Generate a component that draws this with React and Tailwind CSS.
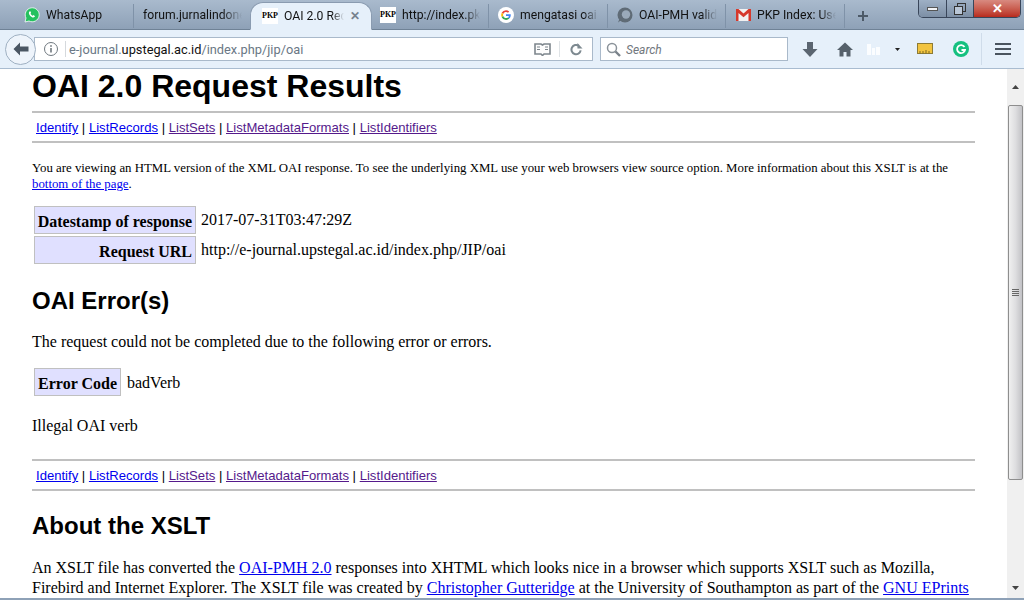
import React from "react";

const Sep = () => <div className="w-px h-[24px] bg-[#7f92a8] shrink-0" />;

const Pkp = () => (
  <span className="w-4 h-4 bg-white text-black text-[8px] font-bold flex items-center justify-center shrink-0 font-['Liberation_Serif',serif] leading-none">PKP</span>
);

function Tab({ icon, label, w, pl = "pl-[9px]" }) {
  return (
    <div className={`flex items-center gap-[6px] shrink-0 overflow-hidden pr-[8px] ${pl}`} style={{ width: w }}>
      {icon}
      <span className="text-[12.2px] text-[#111] whitespace-nowrap overflow-hidden flex-1 [mask-image:linear-gradient(90deg,#000_80%,transparent)]">{label}</span>
    </div>
  );
}

const WhatsApp = () => (
  <svg width="16" height="16" viewBox="0 0 16 16" className="shrink-0">
    <path d="M1 15l1-4A7 7 0 1 1 5 14z" fill="#25c15f" stroke="#fff" strokeWidth="0.8" />
    <path d="M5.5 4.5c-1 1-.8 2.6.6 4.2 1.5 1.6 3.2 2.3 4.3 1.4.6-.5.6-1 .4-1.2l-1.4-.8-.7.7c-.8-.2-1.900-1.300-2.200-2.200l.7-.7-.7-1.500c-.2-.1-.6 0-1 .1z" fill="#fff" />
  </svg>
);
const Google = () => (
  <svg width="16" height="16" viewBox="0 0 16 16" className="shrink-0">
    <circle cx="8" cy="8" r="8" fill="#fff" />
    <path d="M8 3.200A4.800 4.800 0 0 1 11.200 4.400L10 5.700A3 3 0 0 0 5.200 7L3.700 5.800A4.800 4.800 0 0 1 8 3.200z" fill="#ea4335" />
    <path d="M3.700 5.800L5.200 7a3 3 0 0 0 0 2L3.700 10.200a4.800 4.800 0 0 1 0-4.400z" fill="#fbbc05" />
    <path d="M3.700 10.200L5.200 9A3 3 0 0 0 10 10.400l1.400 1.100A4.800 4.800 0 0 1 3.700 10.200z" fill="#34a853" />
    <path d="M8 7.200h4.700c.2 1.700-.3 3.200-1.300 4.300L10 10.400c.5-.4.800-.9.900-1.500H8z" fill="#4285f4" />
  </svg>
);
const Oai = () => (
  <svg width="16" height="16" viewBox="0 0 16 16" className="shrink-0">
    <circle cx="8" cy="8" r="7.500" fill="#5f6b76" />
    <circle cx="9" cy="7.500" r="4.200" fill="#9aa9b9" />
    <path d="M1 15.500l4-3-2-2z" fill="#5f6b76" />
  </svg>
);
const Gmail = () => (
  <svg width="15" height="12" viewBox="0 0 15 12" className="shrink-0">
    <rect width="15" height="12" fill="#f1f1f1" />
    <path d="M0 0h2.500L7.500 4.500 12.500 0H15v12h-2.500V4L7.500 8.200 2.500 4v8H0z" fill="#d6382c" />
  </svg>
);

const link = "text-[#0000ee] underline";
const visited = "text-[#551a8b] underline";

function Nav() {
  return (
    <div className="border-y-2 border-[#c0c0c0] h-[32px] flex items-center pl-1 pt-[2px] text-[13.1px] text-black font-['Liberation_Sans',sans-serif] whitespace-pre">
      <a className={link}>Identify</a> | <a className={link}>ListRecords</a> | <a className={visited}>ListSets</a> | <a className={visited}>ListMetadataFormats</a> | <a className={visited}>ListIdentifiers</a>
    </div>
  );
}

const Th = ({ children }) => (
  <div className="bg-[#e0e0ff] border border-[#c0c0c0] font-bold text-[16px] text-right whitespace-nowrap pr-[3px] h-[28px] leading-[29px]">{children}</div>
);

const h2 = "font-['Liberation_Sans',sans-serif] font-bold text-[24px] leading-[28px] text-black";

export default function App() {
  return (
    <div className="w-[1024px] h-[600px] overflow-hidden flex flex-col bg-white font-['Liberation_Serif',serif]">
      {/* tab strip */}
      <div className="h-[30px] shrink-0 pt-[2px] bg-gradient-to-b from-[#a9bacd] to-[#8ea1b7] border-b border-[#6f8296] flex items-center relative font-['Roboto',sans-serif]">
        <div className="w-[15px] shrink-0" />
        <Tab icon={<WhatsApp />} label="WhatsApp" w={118} />
        <Sep />
        <Tab icon={null} label="forum.jurnalindonesia" w={116} />
        <div className="w-[122px] h-[28px] -mb-px self-end shrink-0 bg-[#e6f0fa] rounded-t-[13px] flex items-center px-[11px] gap-[6px] relative z-10 border-x border-t border-[#8a9bb0] border-b border-b-[#e6f0fa]">
          <Pkp />
          <span className="text-[12.2px] text-[#111] whitespace-nowrap overflow-hidden w-[60px] [mask-image:linear-gradient(90deg,#000_80%,transparent)]">OAI 2.0 Request</span>
          <span className="ml-auto text-[12px] font-bold text-[#76828e] leading-none">✕</span>
        </div>
        <Tab icon={<Pkp />} label="http://index.pkp" w={116} pl="pl-[8px]" />
        <Sep />
        <Tab icon={<Google />} label="mengatasi oai" w={118} pl="pl-[9px]" />
        <Sep />
        <Tab icon={<Oai />} label="OAI-PMH validator" w={117} pl="pl-[9px]" />
        <Sep />
        <Tab icon={<Gmail />} label="PKP Index: User" w={118} pl="pl-[10px]" />
        <Sep />
        <svg width="12" height="12" viewBox="0 0 12 12" className="ml-[12px] shrink-0"><path d="M6 1v10M1 6h10" stroke="#4d5a68" strokeWidth="2" /></svg>
        {/* window controls */}
        <div className="absolute right-[3px] top-0 w-[103px] h-[18px] flex rounded-b-[5px] overflow-hidden border border-t-0 border-[#39465a]">
          <div className="w-[28px] bg-gradient-to-b from-[#9eb0c5] to-[#7d8fa5] flex items-center justify-center border-r border-[#39465a]">
            <div className="w-[11px] h-[4px] bg-[#f1f3f6] border border-[#555]" />
          </div>
          <div className="w-[27px] bg-gradient-to-b from-[#9eb0c5] to-[#7d8fa5] flex items-center justify-center border-r border-[#39465a]">
            <svg width="12" height="12" viewBox="0 0 12 12"><rect x="3.500" y="0.500" width="8" height="8" fill="none" stroke="#333" /><rect x="0.500" y="3.500" width="8" height="8" fill="#b9c6d6" stroke="#333" /></svg>
          </div>
          <div className="flex-1 bg-gradient-to-b from-[#d88a80] to-[#b8291c] flex items-center justify-center text-white text-[13px] font-bold leading-none">✕</div>
        </div>
      </div>
      {/* nav bar */}
      <div className="h-[39px] shrink-0 bg-[#e6f0fa] border-b border-[#a9bcd0] flex items-center relative">
        <div className="ml-[5px] w-[31px] h-[31px] rounded-full bg-[#eef4fb] border border-[#9fb0c2] flex items-center justify-center relative z-10 shrink-0">
          <svg width="16" height="14" viewBox="0 0 16 14"><path d="M7 0.500L0.500 7 7 13.500V9.500h8.500v-5H7z" fill="#4a5663" /></svg>
        </div>
        <div className="-ml-[2px] w-[559px] h-[24px] bg-white border border-[#a9b9ca] flex items-center shrink-0 font-['Roboto',sans-serif] text-[12.8px]">
          <svg width="16" height="16" viewBox="0 0 16 16" className="ml-[8px] shrink-0"><circle cx="8" cy="8" r="6.500" fill="none" stroke="#70797f" /><rect x="7.200" y="7" width="1.600" height="4.500" fill="#70797f" /><rect x="7.200" y="4.200" width="1.600" height="1.600" fill="#70797f" /></svg>
          <div className="w-px h-[16px] bg-[#d5d9dd] ml-[6px] mr-[3px]" />
          <span className="text-[#6a7785] pt-px">e-journal.<span className="text-[#111]">upstegal.ac.id</span>/index.php/jip/oai</span>
          <div className="ml-auto flex items-center">
            <svg width="17" height="13" viewBox="0 0 17 13"><path d="M1 1h6l1.500 1L10 1h6v10h-6l-1.500 1.500L7 11H1z" fill="#fdfdfd" stroke="#7d868d" strokeWidth="1.600" /><path d="M3 4h3M3 6.500h3M11 4h3M11 6.500h3" stroke="#7d868d" /></svg>
            <div className="w-px h-[16px] bg-[#dfe3e6] ml-[8px] mr-[10px]" />
            <svg width="13" height="13" viewBox="0 0 14 14" className="mr-[9px]"><path d="M11.500 8A5 5 0 1 1 9.500 3" fill="none" stroke="#7d8990" strokeWidth="2.200" /><path d="M8 0v6h5.500z" fill="#7d8990" /></svg>
          </div>
        </div>
        <div className="ml-[7px] w-[188px] h-[24px] bg-white border border-[#a9b9ca] flex items-center shrink-0 font-['Roboto',sans-serif]">
          <svg width="15" height="15" viewBox="0 0 15 15" className="ml-[5px] shrink-0"><circle cx="6" cy="6" r="4.500" fill="none" stroke="#8a9299" strokeWidth="1.500" /><path d="M9.500 9.500L14 14" stroke="#7a828a" strokeWidth="2.400" /></svg>
          <span className="ml-[5px] pt-px text-[12px] italic text-[#71777d]">Search</span>
        </div>
        <svg width="16" height="15" viewBox="0 0 16 15" className="ml-[14px] shrink-0"><path d="M5 0h6v7h4.500L8 15 .5 7H5z" fill="#5b6570" /></svg>
        <svg width="16" height="15" viewBox="0 0 16 15" className="ml-[19px] shrink-0"><path d="M8 .5L0 8h2.500v6.500h4V10h3v4.500h4V8H16z" fill="#56616b" /></svg>
        <div className="ml-[14px] w-[13px] h-[11px] flex items-end gap-px shrink-0">
          <div className="w-[4px] h-[11px] bg-[#fbfdff]" />
          <div className="w-[4px] h-[7px] bg-[#fbfdff]" />
          <div className="w-[4px] h-[8px] bg-[#fbfdff]" />
        </div>
        <svg width="5" height="3" viewBox="0 0 5 3" className="ml-[15px] shrink-0"><path d="M0 0h5L2.500 3z" fill="#222" /></svg>
        <svg width="16" height="13" viewBox="0 0 16 13" className="ml-[17px] shrink-0"><rect x=".5" y=".5" width="15" height="10" fill="#f2c440" stroke="#8d7b35" /><path d="M3 10.500V8M6 10.500V8M9 10.500V7M12 10.500V8" stroke="#7d6a20" /></svg>
        <svg width="16" height="16" viewBox="0 0 16 16" className="ml-[20px] shrink-0"><circle cx="8" cy="8" r="8" fill="#15c07f" /><path d="M11.500 6A4 4 0 1 0 12 9H8.500" fill="none" stroke="#fff" strokeWidth="1.800" /></svg>
        <div className="w-px h-[32px] bg-[#cfdcea] ml-[12px] shrink-0" />
        <div className="ml-[13px] w-[16px] flex flex-col gap-[3px] shrink-0">
          <div className="h-[2px] bg-[#4a545e]" />
          <div className="h-[2px] bg-[#4a545e]" />
          <div className="h-[2px] bg-[#4a545e]" />
        </div>
      </div>
      {/* page */}
      <div className="flex-1 flex min-h-0 relative">
        <div className="flex-1 min-w-0 overflow-hidden pl-[32px] pr-[32px] text-black">
          <h1 className="font-['Liberation_Sans',sans-serif] font-bold text-[32px] leading-[34px]">OAI 2.0 Request Results</h1>
          <div className="mt-[8px]"><Nav /></div>
          <p className="mt-[17px] text-[12.84px] leading-[16px]">
            You are viewing an HTML version of the XML OAI response. To see the underlying XML use your web browsers view source option. More information about this XSLT is at the <a className={link}>bottom of the page</a>.
          </p>
          <div className="mt-[14px] ml-[2px] flex flex-col gap-[2px] items-start">
            <div className="flex">
              <div className="w-[162px]"><Th>Datestamp of response</Th></div>
              <span className="ml-[5px] text-[16px] leading-[28px]">2017-07-31T03:47:29Z</span>
            </div>
            <div className="flex">
              <div className="w-[162px]"><Th>Request URL</Th></div>
              <span className="ml-[5px] text-[16px] leading-[28px]">http://e-journal.upstegal.ac.id/index.php/JIP/oai</span>
            </div>
          </div>
          <h2 className={`${h2} mt-[23px]`}>OAI Error(s)</h2>
          <p className="mt-[18px] text-[16px] leading-[18px]">The request could not be completed due to the following error or errors.</p>
          <div className="mt-[17px] ml-[2px] flex">
            <div className="w-[87px]"><Th>Error Code</Th></div>
            <span className="ml-[6px] text-[16px] leading-[28px] pt-px">badVerb</span>
          </div>
          <p className="mt-[20px] text-[16px] leading-[18px]">Illegal OAI verb</p>
          <div className="mt-[24px]"><Nav /></div>
          <h2 className={`${h2} mt-[21px]`}>About the XSLT</h2>
          <p className="mt-[18px] text-[16px] leading-[20px]">
            An XSLT file has converted the <a className={link}>OAI-PMH 2.0</a> responses into XHTML which looks nice in a browser which supports XSLT such as Mozilla, Firebird and Internet Explorer. The XSLT file was created by <a className={link}>Christopher Gutteridge</a> at the University of Southampton as part of the <a className={link}>GNU EPrints</a> system, and is freely redistributable under the GPL.
          </p>
        </div>
        {/* scrollbar */}
        <div className="w-[17px] shrink-0 bg-[#f0f0f0] flex flex-col items-center relative">
          <div className="h-[36px] w-full flex items-center justify-center shrink-0">
            <svg width="7" height="4" viewBox="0 0 7 4"><path d="M3.500 0L7 4H0z" fill="#444" /></svg>
          </div>
          <div className="w-[15px] h-[375px] rounded-[2px] border border-[#8e8e8e] bg-gradient-to-r from-[#f0f0f0] via-[#dedee0] to-[#c2c2c6] flex items-center justify-center">
            <div className="w-[7px] flex flex-col gap-px">
              <div className="h-px bg-[#666]" /><div className="h-px bg-[#666]" /><div className="h-px bg-[#666]" /><div className="h-px bg-[#666]" />
            </div>
          </div>
          <div className="mt-auto h-[20px] flex items-center justify-center">
            <svg width="7" height="4" viewBox="0 0 7 4"><path d="M0 0h7L3.500 4z" fill="#444" /></svg>
          </div>
        </div>
      </div>
      <div className="h-[2px] shrink-0 bg-[#8ea1b7]" />
    </div>
  );
}
